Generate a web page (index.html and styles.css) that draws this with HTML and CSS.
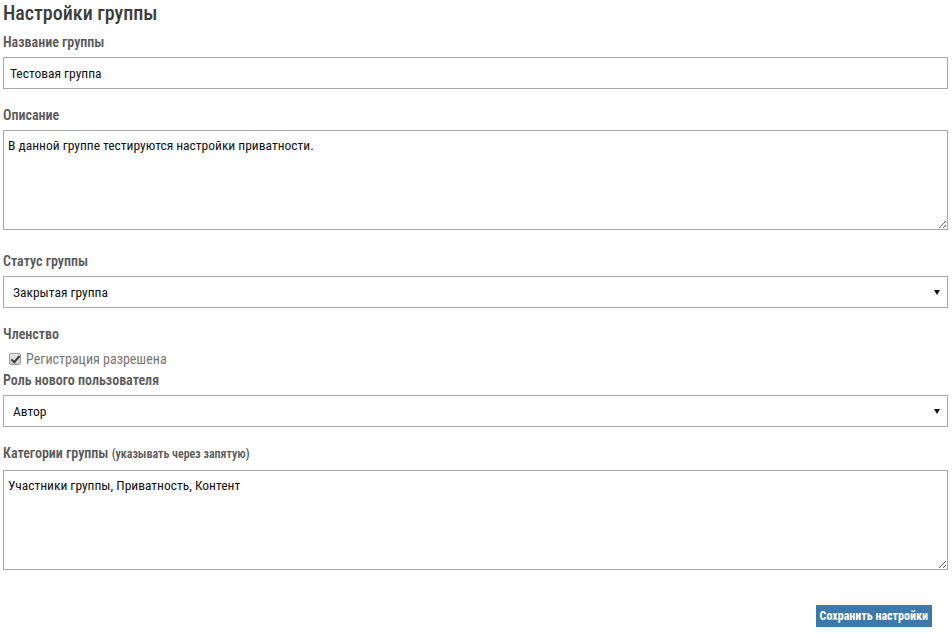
FILE: index.html
```html
<!DOCTYPE html>
<html lang="ru">
<head>
    <meta charset="UTF-8">
    <meta name="viewport" content="width=device-width, initial-scale=1.0">
    <title>Настройки группы</title>
    <link rel="stylesheet" href="styles.css">
</head>
<body>
    <form class="settings">
        <h1 class="settings__title">Настройки группы</h1>

        <div class="field field--first">
            <label class="field__label" for="group_name">Название группы</label>
            <input class="field__input" id="group_name" type="text" value="Тестовая группа">
        </div>

        <div class="field">
            <label class="field__label" for="group_desc">Описание</label>
            <textarea class="field__input field__input--area" id="group_desc">В данной группе тестируются настройки приватности.</textarea>
        </div>

        <div class="field field--after-area">
            <label class="field__label" for="group_status">Статус группы</label>
            <div class="select">
                <select class="field__input field__input--select" id="group_status">
                    <option>Закрытая группа</option>
                    <option>Открытая группа</option>
                </select>
            </div>
        </div>

        <div class="field">
            <span class="field__label">Членство</span>
            <label class="check">
                <input class="check__box" type="checkbox" checked>
                <span class="check__mark"></span>
                Регистрация разрешена
            </label>
            <label class="field__label field__label--tight" for="group_role">Роль нового пользователя</label>
            <div class="select">
                <select class="field__input field__input--select" id="group_role">
                    <option>Автор</option>
                    <option>Читатель</option>
                </select>
            </div>
        </div>

        <div class="field">
            <label class="field__label field__label--wide" for="group_tags">Категории группы <small>(указывать через запятую)</small></label>
            <textarea class="field__input field__input--area" id="group_tags">Участники группы, Приватность, Контент</textarea>
        </div>

        <div class="actions">
            <button class="button" type="button">Сохранить настройки</button>
        </div>
    </form>
</body>
</html>
```
FILE: styles.css
```css
*{
    margin: 0;
    padding: 0;
    box-sizing: border-box;
}
html{
    background: #ffffff;
    font-family: "Roboto Condensed", Roboto, sans-serif;
}
body{
    padding: 0 4px 0 3px;
}

.settings__title {
    padding-top: 1px;
    font-size: 20px;
    line-height: 24px;
    font-weight: 500;
    color: #3c3c3c;
}

.field {
    margin-top: 16px;
}
.field--first {
    margin-top: 7px;
}
.field--after-area {
    margin-top: 21px;
}

.field__label {
    display: block;
    margin-bottom: 5px;
    font-size: 14px;
    line-height: 20px;
    font-weight: 600;
    color: #5a5a5a;
}
.field__label small {
    font-size: 12px;
}
.field__label--tight {
    margin-top: 1px;
}
.field__label--wide {
    margin-bottom: 6px;
}

.field__input {
    display: block;
    width: 100%;
    height: 32px;
    padding: 0 6px;
    border: 1px solid #a9a9a9;
    border-radius: 0;
    background: #ffffff;
    font-family: inherit;
    font-size: 13.5px;
    color: #111111;
    outline: none;
}
.field__input--area {
    height: 100px;
    padding: 7px 4px;
    line-height: 15px;
    resize: vertical;
}
.field__input--select {
    padding-left: 9px;
    appearance: none;
    -webkit-appearance: none;
}

/* small black triangle on the right of each dropdown */
.select {
    position: relative;
}
.select::after {
    content: "";
    position: absolute;
    top: 14px;
    right: 8px;
    border-left: 3px solid transparent;
    border-right: 3px solid transparent;
    border-top: 5px solid #111111;
    pointer-events: none;
}

.check {
    display: flex;
    align-items: center;
    margin-top: 2px;
    padding-left: 6px;
    font-size: 14px;
    line-height: 20px;
    color: #777777;
}
.check__box {
    display: none;
}
.check__mark {
    position: relative;
    width: 12px;
    height: 12px;
    margin-right: 5px;
    border: 1px solid #9a9a9a;
    border-radius: 2px;
    background: linear-gradient(#e6e6e6, #d2d2d2);
}
.check__box:checked + .check__mark::after {
    content: "";
    position: absolute;
    left: 3px;
    top: 0;
    width: 3px;
    height: 7px;
    border-right: 2px solid #3a3a3a;
    border-bottom: 2px solid #3a3a3a;
    transform: rotate(40deg);
}

.actions {
    display: flex;
    justify-content: flex-end;
    padding: 35px 16px 0 0;
}
.button {
    height: 22px;
    padding: 0 4px;
    border: none;
    background: #3b79ac;
    color: #ffffff;
    font-family: inherit;
    font-size: 12px;
    font-weight: 700;
    cursor: pointer;
}
```
